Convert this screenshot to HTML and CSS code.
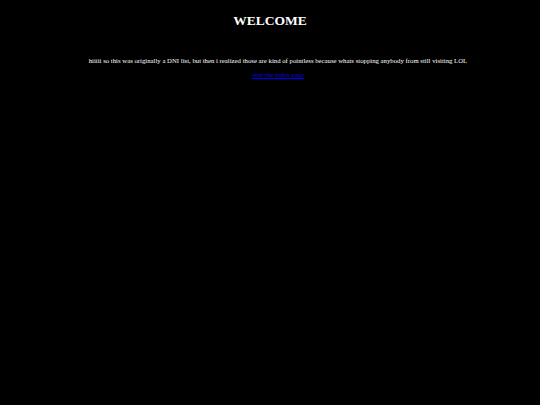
FILE: index.html
```html
<!DOCTYPE html>
<html>
<head>
<meta charset="utf-8">
<link rel="stylesheet" href="styles.css">
</head>
<body>
<main class="page">
<h1 class="title">WELCOME</h1>
<p class="intro">hiiiii so this was originally a DNI list, but then i realized those are kind of pointless because whats stopping anybody from still visiting LOL</p>
<p class="nav"><a href="#" class="nav-link">visit the index page</a></p>
</main>
</body>
</html>
```
FILE: styles.css
```css
html, body {
  margin: 0;
  padding: 0;
  background: #000;
  color: #fff;
  font-family: "Liberation Serif", "Times New Roman", serif;
}
.page {
  display: flex;
  flex-direction: column;
  align-items: center;
  padding-top: 12px;
}
.title {
  margin: 0;
  font-size: 13.5px;
  font-weight: bold;
  line-height: 18px;
}
.intro {
  margin: 26px 0 0;
  padding-left: 16px;
  font-size: 6.75px;
  line-height: 9px;
}
.nav {
  margin: 5px 0 0;
  padding-left: 16px;
  font-size: 6.7px;
  line-height: 9px;
}
.nav-link {
  color: #0000ee;
}
```
